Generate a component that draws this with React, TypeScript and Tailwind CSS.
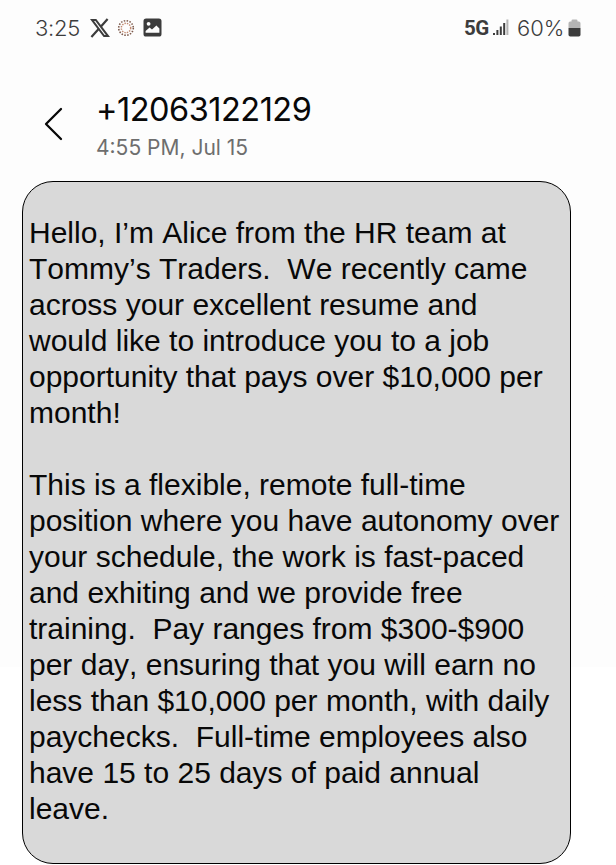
import React from "react";

const lines: string[] = [
  "Hello, I’m Alice from the HR team at",
  "Tommy’s Traders.  We recently came",
  "across your excellent resume and",
  "would like to introduce you to a job",
  "opportunity that pays over $10,000 per",
  "month!",
  "",
  "This is a flexible, remote full-time",
  "position where you have autonomy over",
  "your schedule, the work is fast-paced",
  "and exhiting and we provide free",
  "training.  Pay ranges from $300-$900",
  "per day, ensuring that you will earn no",
  "less than $10,000 per month, with daily",
  "paychecks.  Full-time employees also",
  "have 15 to 25 days of paid annual",
  "leave.",
];

function XLogo() {
  return (
    <svg className="ml-[11px] h-[20px] w-[20px]" viewBox="0 0 20 20" fill="none" stroke="#3c3c3c">
      <path d="M1.9 1.9H5.8L18 18.1H14.1Z" strokeWidth="2" />
      <path d="M17.6 1L11 8.4M8.6 11L1.4 19" strokeWidth="2.2" />
    </svg>
  );
}

function DottedRing() {
  return (
    <svg className="ml-[7px] h-[18px] w-[18px]" viewBox="0 0 18 18" fill="none">
      <circle cx="9" cy="9" r="7.3" stroke="#7d5a4c" strokeWidth="1.6" strokeDasharray="1.5 1.4" />
      <circle cx="9" cy="9" r="4.7" stroke="#c28a70" strokeWidth="1.5" strokeDasharray="1.4 1.1" />
    </svg>
  );
}

function PhotoIcon() {
  return (
    <svg className="ml-[8px] h-[19px] w-[19px]" viewBox="0 0 19 19">
      <rect x="0.5" y="0.5" width="18" height="18" rx="2.6" fill="#3c3c3c" />
      <circle cx="5.6" cy="5.8" r="1.9" fill="#fdfdfd" />
      <path d="M2.6 14.8V13L6.6 9.4L9 11.6L13.4 7.6L16.4 10.6V14.8Z" fill="#fdfdfd" />
    </svg>
  );
}

function Signal() {
  return (
    <svg className="ml-[4px] h-[17px] w-[16px]" viewBox="0 0 16 17" fill="#3c3c3c">
      <rect x="0" y="14" width="2" height="2" />
      <rect x="3.4" y="11" width="2" height="5" />
      <rect x="6.8" y="7.5" width="2" height="8.5" />
      <rect x="10.2" y="4" width="2" height="12" />
      <rect x="13.4" y="0.5" width="2" height="15.5" fill="#b4b4b4" />
    </svg>
  );
}

function Battery() {
  return (
    <svg className="ml-[4px] h-[18px] w-[13px]" viewBox="0 0 13 18">
      <path d="M0.5 9V4.2Q0.5 2.5 2.2 2.5H3.5V1.8Q3.5 .5 4.8 .5H8.2Q9.5 .5 9.5 1.8V2.5H10.8Q12.5 2.5 12.5 4.2V9Z" fill="#b5b5b5" />
      <path d="M0.5 9H12.5V15.7Q12.5 17.5 10.7 17.5H2.3Q.5 17.5 .5 15.7Z" fill="#3c3c3c" />
    </svg>
  );
}

export default function App() {
  return (
    <div className="h-[865px] w-[616px] overflow-hidden bg-white bg-linear-to-b from-[#fdfdfd] from-[667px] to-white to-[667px]">
      <header className="flex h-[55px] items-center justify-between pr-[35px] pl-[35px] font-[Inter,sans-serif] text-[#3c3c3c]">
        <div className="flex items-center">
          <span className="w-[44px] text-[22px] leading-[28px] font-[360] tracking-[-0.3px] whitespace-nowrap">3:25</span>
          <XLogo />
          <DottedRing />
          <PhotoIcon />
        </div>
        <div className="flex items-center">
          <span className="w-[25px] font-[Roboto,sans-serif] text-[20.5px] leading-[28px] font-bold tracking-[-0.5px]">5G</span>
          <Signal />
          <span className="ml-[8px] w-[47px] text-[22px] leading-[28px] font-[360] whitespace-nowrap">60%</span>
          <Battery />
        </div>
      </header>
      <section className="flex h-[126px] pl-[44px] font-[Inter,sans-serif]">
        <svg className="mt-[52px] h-[34px] w-[20px]" viewBox="0 0 20 34" fill="none" stroke="#080808" strokeWidth="2.3" strokeLinecap="round" strokeLinejoin="round">
          <path d="M17 2L2 17L17 32" />
        </svg>
        <div className="pt-[34px] pl-[32px] whitespace-nowrap">
          <h1 className="text-[32.5px] leading-[42px] font-normal tracking-[-0.5px] text-[#080808]">+12063122129</h1>
          <p className="text-[21px] leading-[33px] text-[#6e6e6e]">4:55 PM, Jul 15</p>
        </div>
      </section>
      <main className="ml-[22px] h-[683px] w-[549px] rounded-[31px] border border-black bg-[#d9d9d9] pt-[33px] pl-[6px] font-['Liberation_Sans',Arial,sans-serif] text-[30px] leading-[36px] text-[#080808] [font-kerning:none]">
        {lines.map((line, i) => (
          <p key={i} className="h-[36px] whitespace-pre">{line}</p>
        ))}
      </main>
    </div>
  );
}
